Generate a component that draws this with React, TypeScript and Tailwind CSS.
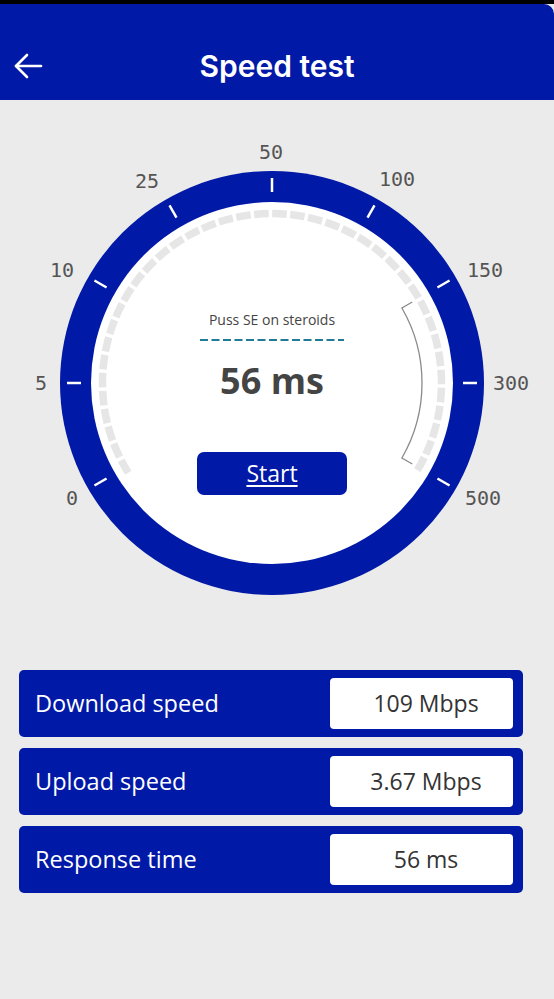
import React from 'react';

const BLUE = '#0019a6';
const CX = 272;
const CY = 283;

// point on the dial, angle in degrees clockwise from top
const pt = (deg: number, r: number) => {
  const a = (deg * Math.PI) / 180;
  return [CX + r * Math.sin(a), CY - r * Math.cos(a)];
};

const arc = (from: number, to: number, r: number) => {
  const [x1, y1] = pt(from, r);
  const [x2, y2] = pt(to, r);
  const large = to - from > 180 ? 1 : 0;
  return `M ${x1} ${y1} A ${r} ${r} 0 ${large} 1 ${x2} ${y2}`;
};

const labels = [
  { t: '0', x: 72, y: 398 },
  { t: '5', x: 41, y: 283 },
  { t: '10', x: 62, y: 170 },
  { t: '25', x: 147, y: 81 },
  { t: '50', x: 271, y: 52 },
  { t: '100', x: 397, y: 79 },
  { t: '150', x: 485, y: 170 },
  { t: '300', x: 511, y: 283 },
  { t: '500', x: 483, y: 398 },
];

const results = [
  { label: 'Download speed', value: '109 Mbps' },
  { label: 'Upload speed', value: '3.67 Mbps' },
  { label: 'Response time', value: '56 ms' },
];

const Dial = () => {
  const r = 169.5;
  const len = (244 / 360) * 2 * Math.PI * r;
  const period = len / 40;
  const [bx1, by1] = pt(60, 150);
  const [bx2, by2] = pt(60, 162);
  const [bx3, by3] = pt(120, 150);
  const [bx4, by4] = pt(120, 162);

  return (
    <svg width="554" height="560" viewBox="0 0 554 560" className="block">
      <circle cx={CX} cy={CY} r={212} fill={BLUE} />
      <circle cx={CX} cy={CY} r={181} fill="#ffffff" />
      {/* grey segmented track */}
      <path
        d={arc(-122, 122, r)}
        fill="none"
        stroke="#e6e6e6"
        strokeWidth={7.5}
        strokeDasharray={`${period - 3.5} 3.5`}
      />
      {/* range bracket */}
      <path
        d={`M ${bx2} ${by2} L ${bx1} ${by1} ${arc(60, 120, 150).replace('M', 'L')} L ${bx4} ${by4}`}
        fill="none"
        stroke="#8a8a8a"
        strokeWidth={1.3}
      />
      {[-120, -90, -60, -30, 0, 30, 60, 90, 120].map((d) => {
        const [x1, y1] = pt(d, 191);
        const [x2, y2] = pt(d, 205);
        return <line key={d} x1={x1} y1={y1} x2={x2} y2={y2} stroke="#ffffff" strokeWidth={2.5} />;
      })}
      {labels.map((l) => (
        <text
          key={l.t}
          x={l.x}
          y={l.y}
          textAnchor="middle"
          dominantBaseline="central"
          fill="#555555"
          fontSize="20"
          fontFamily="'DejaVu Sans Mono', monospace"
        >
          {l.t}
        </text>
      ))}
    </svg>
  );
};

export default function App() {
  return (
    <div className="w-[554px] h-[999px] bg-[#ebebeb] overflow-hidden font-['Open_Sans',sans-serif]">
      <div className="h-[4px] bg-black" />
      <header className="h-[96px] bg-[#0019a6] rounded-tr-[10px] pt-[28px]">
        <div className="relative h-[68px] flex items-center justify-center">
          <button className="absolute left-[13px] top-[20px] w-[30px] h-[28px] flex items-center justify-center">
            <svg width="30" height="26" viewBox="0 0 30 26" fill="none" stroke="#ffffff" strokeWidth="2.6" strokeLinecap="round" strokeLinejoin="round">
              <path d="M28 13H3" />
              <path d="M14 2L3 13l11 11" />
            </svg>
          </button>
          <h1 className="font-['Inter',sans-serif] text-[30px] font-semibold text-white">Speed test</h1>
        </div>
      </header>

      <div className="relative h-[560px]">
        <Dial />
        <div className="absolute left-0 top-[210px] w-[544px] flex flex-col items-center">
          <p className="text-[14px] leading-[20px] text-[#444444]">Puss SE on steroids</p>
          <svg width="144" height="2" className="mt-[9px] block">
            <line x1="0" y1="1" x2="144" y2="1" stroke="#1f7b97" strokeWidth="2" strokeDasharray="8 3.5" />
          </svg>
          <p className="mt-[20px] text-[36px] leading-[40px] font-bold text-[#444444]">56 ms</p>
          <button className="mt-[51px] w-[150px] h-[43px] rounded-[7px] bg-[#0019a6] text-white text-[23px] underline underline-offset-[3px] decoration-[1.5px]">
            Start
          </button>
        </div>
      </div>

      <div className="mt-[10px] pl-[19px] pr-[31px] flex flex-col gap-[11px]">
        {results.map((r) => (
          <div key={r.label} className="h-[67px] rounded-[5px] bg-[#0019a6] flex items-center justify-between pl-[16px] pr-[10px]">
            <span className="text-white text-[23.5px]">{r.label}</span>
            <span className="w-[183px] h-[51px] rounded-[4px] bg-white flex items-center justify-center pl-[9px] text-[23px] text-[#333333]">
              {r.value}
            </span>
          </div>
        ))}
      </div>
    </div>
  );
}
